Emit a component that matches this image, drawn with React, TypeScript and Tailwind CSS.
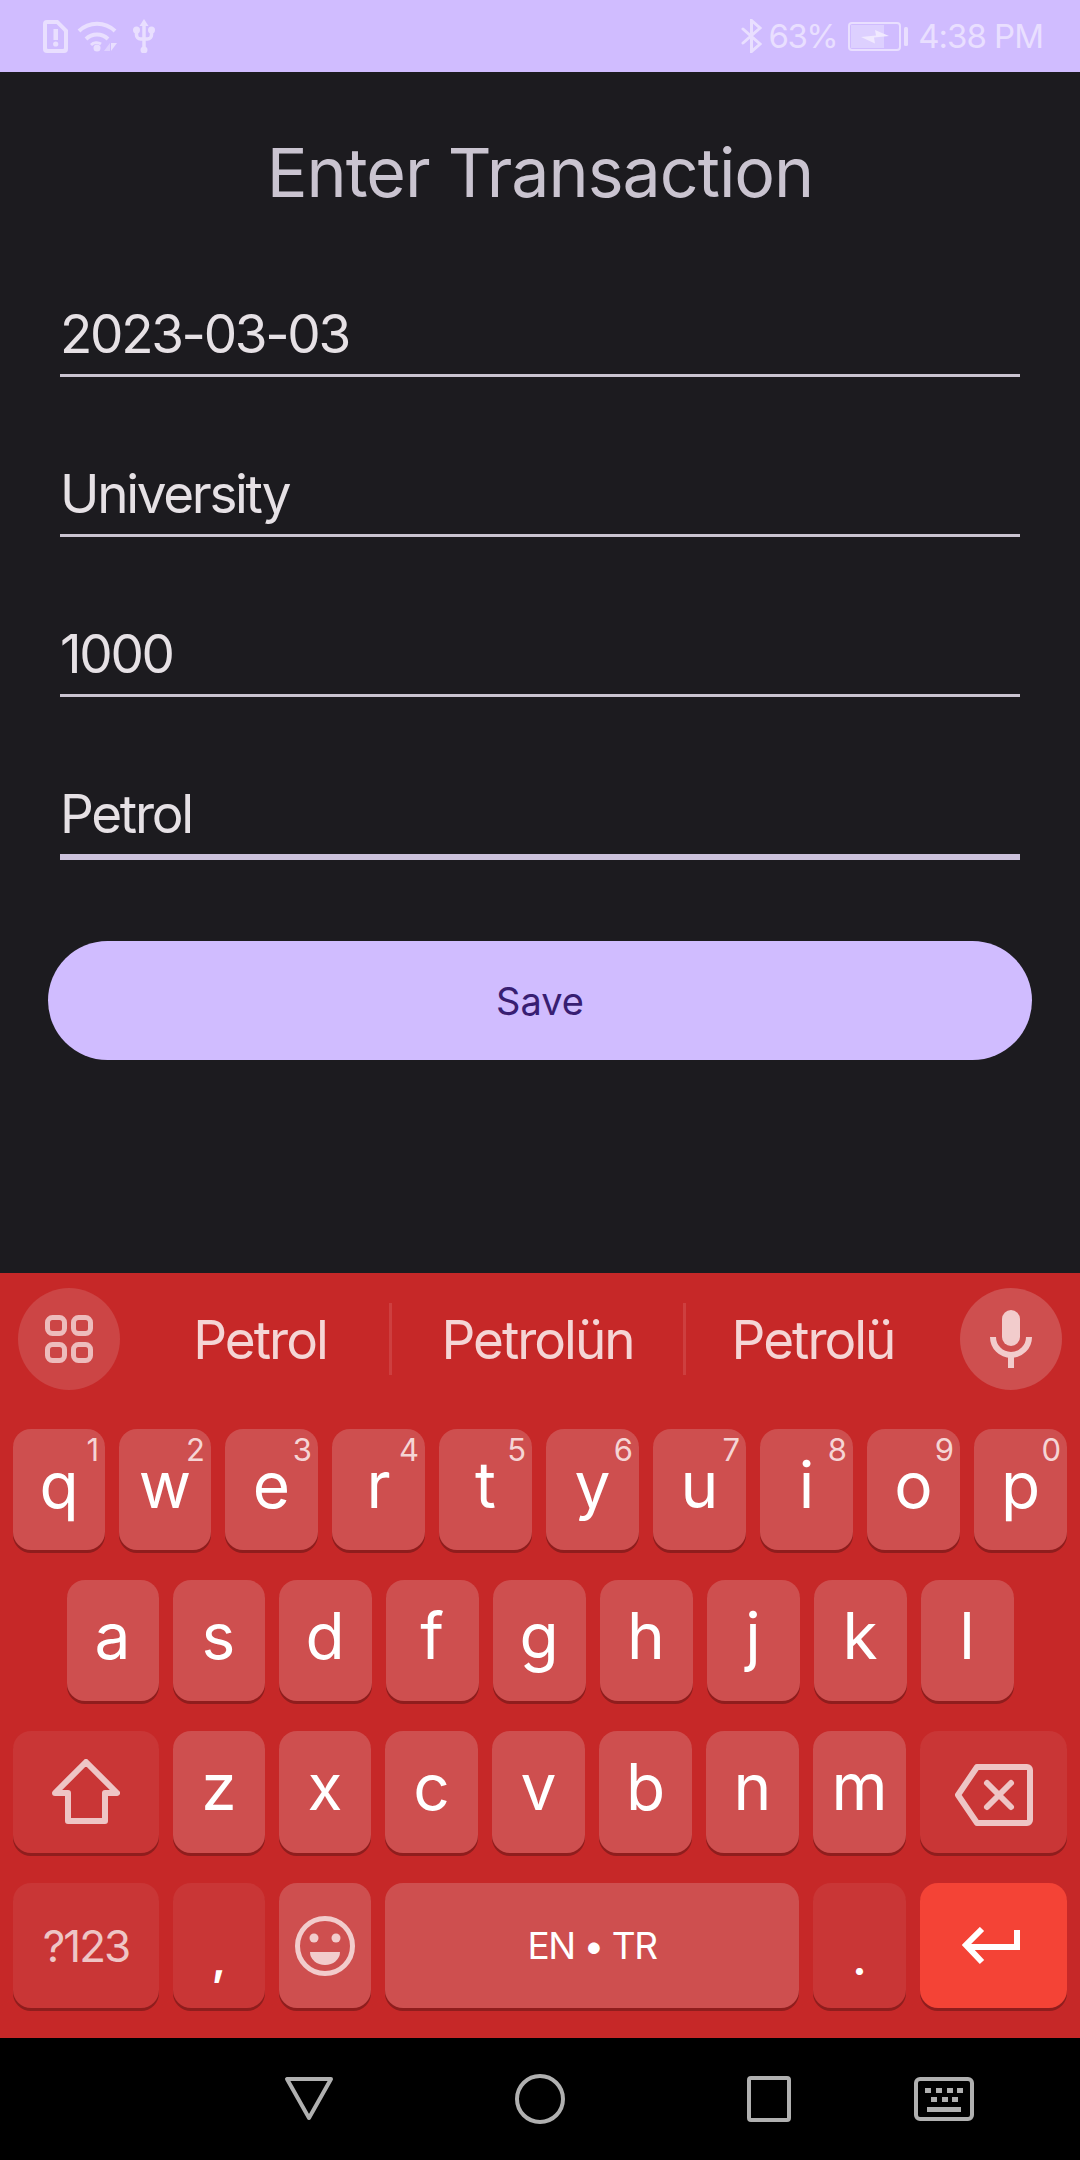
const font = "font-['Inter',sans-serif]";

function StatusBar() {
  return (
    <div className="flex h-[72px] items-center justify-between bg-[#d0bcff] pl-[43px] pr-[37px] text-[#e9dfff]">
      <div className="flex items-center">
        <svg width="25" height="33" viewBox="0 0 25 33">
          <path d="M4 0h11l10 10v19a4 4 0 0 1-4 4H4a4 4 0 0 1-4-4V4a4 4 0 0 1 4-4z" fill="currentColor" />
          <path d="M4 4h9.5L21 11.5V28a1 1 0 0 1-1 1H5a1 1 0 0 1-1-1z" fill="#d0bcff" />
          <rect x="10.5" y="9" width="4.5" height="11" fill="currentColor" />
          <circle cx="12.7" cy="24" r="2.6" fill="currentColor" />
        </svg>
        <svg className="ml-[9px]" width="40" height="34" viewBox="0 0 40 34" fill="none" stroke="currentColor" strokeWidth="4">
          <path d="M2 12a26 26 0 0 1 36 0" />
          <path d="M9 20a16 16 0 0 1 22 0" />
          <path d="M14 26a8 8 0 0 1 10-1" strokeWidth="3" />
          <circle cx="20" cy="29" r="3.5" fill="currentColor" stroke="none" />
          <path d="M33 24v8h-6z" fill="currentColor" opacity="0.6" stroke="none" />
          <path d="M34 24h6l-6 8z" fill="currentColor" stroke="none" />
        </svg>
        <svg className="ml-[16px]" width="22" height="34" viewBox="0 0 22 34" fill="none" stroke="currentColor" strokeWidth="3.5">
          <path d="M11 4v26" />
          <path d="M11 0l4.5 7h-9z" fill="currentColor" stroke="none" />
          <circle cx="11" cy="31" r="3.5" fill="currentColor" stroke="none" />
          <path d="M3.5 12v4a4 4 0 0 0 4 4H11M18.5 12v4a4 4 0 0 1-4 4H11" />
          <circle cx="3.5" cy="11" r="3.5" fill="currentColor" stroke="none" />
          <circle cx="18.5" cy="11" r="3.5" fill="currentColor" stroke="none" />
        </svg>
      </div>
      <div className={`flex items-center ${font}`}>
        <svg width="21" height="34" viewBox="0 0 21 34" fill="none" stroke="currentColor" strokeWidth="3" strokeLinecap="round">
          <path d="M2 10l17 15-8.5 7.5V1.5L19 9 2 24" />
        </svg>
        <span className="ml-[6px] text-[33px] leading-none tracking-[-1.5px]">63%</span>
        <svg className="ml-[11px]" width="60" height="29" viewBox="0 0 60 29">
          <rect x="1" y="1" width="51" height="27" rx="3" fill="none" stroke="currentColor" strokeWidth="2" />
          <rect x="3" y="3" width="33" height="23" fill="#ddd0ff" />
          <path d="M13 15l15-1.5L27 8l14 6-15 1.5 1 6z" fill="#f0e9ff" />
          <rect x="56" y="5" width="4" height="19" rx="1.5" fill="currentColor" />
        </svg>
        <span className="ml-[10px] text-[33px] leading-none tracking-[-1px]">4:38 PM</span>
      </div>
    </div>
  );
}

function Field({ value, active }: { value: string; active?: boolean }) {
  return (
    <div className={`flex flex-col justify-end ${active ? "h-[163px]" : "h-[160px]"}`}>
      <div className="pb-[10px] text-[53px] leading-[60px] tracking-[-2.3px] text-[#e6e1e5]">{value}</div>
      <div className={active ? "h-[6px] bg-[#ccc2dc]" : "h-[3px] bg-[#cac4d0]"} />
    </div>
  );
}

function keyWidth(i: number) {
  return i < 2 ? "w-[92px]" : "w-[93px]";
}

function Key({ label, digit, width }: { label: string; digit?: string; width: string }) {
  return (
    <div className={`relative flex items-center justify-center rounded-[18px] bg-[#ce4f4f] pb-[10px] text-[64px] leading-[38px] text-white shadow-[0_3px_0_#8f1d1d] ${width}`}>
      {label}
      {digit && <span className="absolute right-[6px] top-[5px] text-[31px] leading-none text-[#f5d5d5]">{digit}</span>}
    </div>
  );
}

function FnKey({ w, accent, children }: { w: string; accent?: boolean; children: React.ReactNode }) {
  return (
    <div className={`flex items-center justify-center rounded-[18px] shadow-[0_3px_0_#8f1d1d] ${w} ${accent ? "bg-[#f44336]" : "bg-[#c93636]"}`}>
      {children}
    </div>
  );
}

function Keyboard() {
  const top = "qwertyuiop".split("");
  const mid = "asdfghjkl".split("");
  const low = "zxcvbnm".split("");
  const digits = "1234567890";
  return (
    <div className={`flex h-[765px] flex-col bg-[#c62828] ${font}`}>
      <div className="flex h-[156px] pt-[15px]">
        <div className="ml-[18px] flex h-[102px] w-[102px] shrink-0 items-center justify-center rounded-full bg-[#cc4545]">
          <svg width="48" height="48" viewBox="0 0 48 48" fill="none" stroke="#edbcbc" strokeWidth="5">
            <rect x="2.5" y="2.5" width="17" height="16" rx="5" />
            <rect x="28.5" y="2.5" width="17" height="16" rx="5" />
            <rect x="2.5" y="29.5" width="17" height="16" rx="5" />
            <rect x="28.5" y="29.5" width="17" height="16" rx="5" />
          </svg>
        </div>
        <div className="mt-[15px] flex h-[72px] flex-1 items-center text-[53px] tracking-[-2px] text-[#f5d5d5]">
          <div className="flex h-full w-[269px] items-center justify-center pl-[11px] pt-[4px]">Petrol</div>
          <div className="flex h-full w-[297px] items-center justify-center border-x-[3px] border-[#cd3f3f] pt-[4px]">Petrolün</div>
          <div className="flex h-full w-[274px] items-center justify-center pr-[20px] pt-[4px]">Petrolü</div>
        </div>
        <div className="mr-[18px] flex h-[102px] w-[102px] shrink-0 items-center justify-center rounded-full bg-[#ce4f4f]">
          <svg width="42" height="58" viewBox="0 0 42 58" fill="none">
            <rect x="12" y="0" width="18" height="36" rx="9" fill="#f2cccc" />
            <path d="M3 27a18 18 0 0 0 36 0" stroke="#f2cccc" strokeWidth="6" />
            <rect x="18" y="44" width="6" height="14" fill="#f2cccc" />
          </svg>
        </div>
      </div>
      <div className="flex flex-col gap-[30px] px-[13px]">
        <div className="flex h-[121px] gap-[14px]">
          {top.map((k, i) => <Key key={k} label={k} digit={digits[i]} width={keyWidth(i)} />)}
        </div>
        <div className="flex h-[121px] justify-center gap-[14px]">
          {mid.map((k, i) => <Key key={k} label={k} width={keyWidth(i)} />)}
        </div>
        <div className="flex h-[122px] gap-[14px]">
          <FnKey w="w-[146px]">
            <svg width="68" height="66" viewBox="0 0 68 66" fill="none" stroke="#eec5c5" strokeWidth="6" strokeLinejoin="round">
              <path d="M34 3L65 34H53V62H16V34H3z" />
            </svg>
          </FnKey>
          {low.map((k, i) => <Key key={k} label={k} width={keyWidth(i)} />)}
          <FnKey w="flex-1">
            <svg className="mt-[6px]" width="78" height="62" viewBox="0 0 78 62" fill="none" stroke="#eec5c5" strokeWidth="6" strokeLinejoin="round" strokeLinecap="round">
              <path d="M22 3H72a3 3 0 0 1 3 3V56a3 3 0 0 1-3 3H22L3 31z" />
              <path d="M32 19l24 24M56 19L32 43" />
            </svg>
          </FnKey>
        </div>
        <div className="flex h-[125px] gap-[14px]">
          <FnKey w="w-[146px]">
            <span className="text-[44px] tracking-[-2px] text-[#eec5c5]">?123</span>
          </FnKey>
          <FnKey w="w-[92px]">
            <span className="pt-[28px] text-[42px] font-bold leading-none text-white">,</span>
          </FnKey>
          <div className="flex w-[92px] items-center justify-center rounded-[18px] bg-[#ce4f4f] shadow-[0_3px_0_#8f1d1d]">
            <svg width="60" height="60" viewBox="0 0 60 60">
              <circle cx="30" cy="30" r="27.5" fill="none" stroke="#f2cccc" strokeWidth="5" />
              <circle cx="19" cy="22" r="4.5" fill="#f2cccc" />
              <circle cx="41" cy="22" r="4.5" fill="#f2cccc" />
              <path d="M15 36h30a15 13 0 0 1-30 0z" fill="#f2cccc" />
            </svg>
          </div>
          <div className="flex w-[414px] items-center justify-center rounded-[18px] bg-[#ce4f4f] text-[37px] tracking-[-1.5px] text-white shadow-[0_3px_0_#8f1d1d]">
            EN • TR
          </div>
          <FnKey w="w-[93px]">
            <span className="pt-[28px] text-[42px] font-bold leading-none text-white">.</span>
          </FnKey>
          <FnKey w="flex-1" accent>
            <svg className="mr-[5px]" width="58" height="38" viewBox="0 0 58 38" fill="none" stroke="#fff" strokeWidth="6">
              <path d="M55 3v17H6" />
              <path d="M20 2L4 18l16 17" />
            </svg>
          </FnKey>
        </div>
      </div>
    </div>
  );
}

function NavBar() {
  return (
    <div className="flex h-[122px] items-center bg-black pl-[284px]">
      <svg width="50" height="44" viewBox="0 0 50 44" fill="none" stroke="#b0b0b0" strokeWidth="4" strokeLinejoin="round">
        <path d="M3 2H47L25 41z" />
      </svg>
      <svg className="ml-[181px]" width="50" height="50" viewBox="0 0 50 50" fill="none" stroke="#b0b0b0" strokeWidth="4">
        <circle cx="25" cy="25" r="23" />
      </svg>
      <svg className="ml-[182px]" width="44" height="46" viewBox="0 0 44 46" fill="none" stroke="#b0b0b0" strokeWidth="4" strokeLinejoin="round">
        <rect x="2" y="2" width="40" height="42" rx="2" />
      </svg>
      <svg className="ml-[123px]" width="60" height="44" viewBox="0 0 60 44" fill="#b0b0b0">
        <path fillRule="evenodd" d="M6 0h48a6 6 0 0 1 6 6v32a6 6 0 0 1-6 6H6a6 6 0 0 1-6-6V6a6 6 0 0 1 6-6zm0 4a2 2 0 0 0-2 2v32a2 2 0 0 0 2 2h48a2 2 0 0 0 2-2V6a2 2 0 0 0-2-2z" />
        <rect x="11" y="11" width="6" height="5" />
        <rect x="22" y="11" width="6" height="5" />
        <rect x="33" y="11" width="6" height="5" />
        <rect x="43" y="11" width="6" height="5" />
        <rect x="17" y="20" width="6" height="5" />
        <rect x="28" y="20" width="6" height="5" />
        <rect x="38" y="20" width="6" height="5" />
        <rect x="13" y="30" width="34" height="5" />
      </svg>
    </div>
  );
}

export default function App() {
  return (
    <div className="flex h-[2160px] w-[1080px] flex-col overflow-hidden bg-[#1c1b1f]">
      <StatusBar />
      <main className={`flex-1 ${font}`}>
        <h1 className="pt-[60px] text-center text-[68px] leading-[80px] tracking-[-1px] text-[#cac4d0]">Enter Transaction</h1>
        <div className="mt-[5px] px-[60px]">
          <Field value="2023-03-03" />
          <Field value="University" />
          <Field value="1000" />
          <Field value="Petrol" active />
        </div>
        <button className="mx-[48px] mt-[81px] flex h-[119px] w-[984px] items-center justify-center rounded-full bg-[#d0bcff] pt-[2px] text-[38px] text-[#381e72]">
          Save
        </button>
      </main>
      <Keyboard />
      <NavBar />
    </div>
  );
}
